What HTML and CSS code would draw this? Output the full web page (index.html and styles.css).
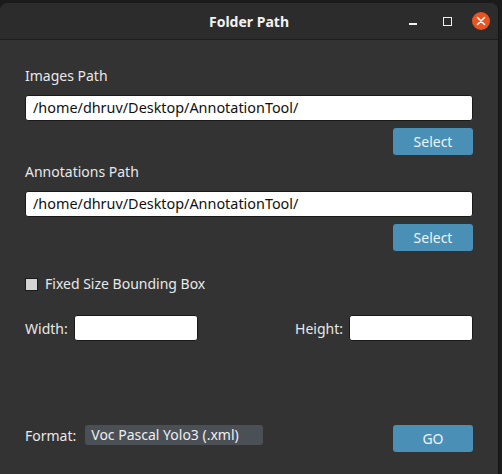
FILE: index.html
```html
<!DOCTYPE html>
<html>
<head>
<meta charset="utf-8">
<link rel="stylesheet" href="styles.css">
</head>
<body>
<div class="window">
  <div class="titlebar">
    <div class="title">Folder Path</div>
    <div class="controls">
      <span class="ctl min"></span>
      <span class="ctl max"></span>
      <span class="ctl close">
        <svg width="18" height="18" viewBox="0 0 18 18"><path d="M5.5 5.5 L12.5 12.5 M12.5 5.5 L5.5 12.5" stroke="#fff" stroke-width="1.6" stroke-linecap="round"/></svg>
      </span>
    </div>
  </div>
  <div class="content">
    <div class="label first">Images Path</div>
    <div class="field">/home/dhruv/Desktop/AnnotationTool/</div>
    <div class="btnrow"><button class="btn">Select</button></div>
    <div class="label second">Annotations Path</div>
    <div class="field">/home/dhruv/Desktop/AnnotationTool/</div>
    <div class="btnrow"><button class="btn">Select</button></div>
    <div class="check"><span class="box"></span><span>Fixed Size Bounding Box</span></div>
    <div class="sizes">
      <div class="pair"><span>Width:</span><span class="small-field"></span></div>
      <div class="pair"><span>Height:</span><span class="small-field h"></span></div>
    </div>
    <div class="bottom">
      <div class="fmt"><span>Format:</span><span class="combo">Voc Pascal Yolo3 (.xml)</span></div>
      <button class="btn go">GO</button>
    </div>
  </div>
</div>
</body>
</html>
```
FILE: styles.css
```css
* { box-sizing: border-box; }
html, body { margin: 0; padding: 0; }
body {
  background: #1b1b1b;
  width: 502px;
  height: 474px;
  overflow: hidden;
  font-family: "Noto Sans", "Open Sans", sans-serif;
  color: #e8e8e8;
}
.window {
  margin-top: 3px;
  width: 499px;
  height: 471px;
  background: #333333;
  border-radius: 8px 8px 0 0;
  border-right: 1px solid #161616;
  overflow: hidden;
}
.titlebar {
  height: 37px;
  background: #2c2c2c;
  border-bottom: 1px solid #1e1e1e;
  display: flex;
  align-items: center;
  justify-content: center;
  position: relative;
}
.title {
  font-weight: bold;
  font-size: 14px;
  color: #f2f2f2;
  padding-top: 1px;
}
.controls {
  position: absolute;
  right: 8px;
  top: 9px;
  display: flex;
  align-items: center;
}
.ctl { display: block; }
.min {
  width: 8px;
  height: 1.5px;
  background: #f0f0f0;
  margin-right: 26px;
  margin-top: 6px;
}
.max {
  width: 9px;
  height: 9px;
  border: 1.5px solid #f0f0f0;
  margin-right: 20px;
}
.close {
  width: 18px;
  height: 18px;
  border-radius: 50%;
  background: #e95420;
}
.close svg { display: block; }
.content {
  padding: 0 25px 0 25px;
}
.label {
  font-size: 14px;
  line-height: 18px;
}
.label.first { margin-top: 27px; }
.label.second { margin-top: 8px; }
.field {
  margin-top: 10px;
  height: 26px;
  background: #ffffff;
  border-radius: 3px;
  border: 1px solid #1a1a1a;
  color: #111;
  font-size: 14.4px;
  line-height: 24px;
  padding-left: 7px;
}
.btnrow {
  display: flex;
  justify-content: flex-end;
  margin-top: 7px;
}
.btn {
  width: 80px;
  height: 27px;
  background: #4a8fb5;
  border: none;
  border-radius: 3px;
  color: #eef4f8;
  font-family: inherit;
  font-size: 14px;
  padding: 0;
}
.check {
  margin-top: 24px;
  display: flex;
  align-items: center;
  gap: 7px;
  font-size: 14px;
  line-height: 18px;
}
.box {
  width: 13px;
  height: 13px;
  background: #d4d4d4;
  border: 1px solid #1a1a1a;
}
.sizes {
  margin-top: 22px;
  display: flex;
  justify-content: space-between;
}
.pair {
  display: flex;
  align-items: center;
  gap: 6px;
  font-size: 14px;
}
.small-field {
  display: block;
  width: 124px;
  height: 26px;
  background: #fff;
  border-radius: 3px;
  border: 1px solid #1a1a1a;
}
.bottom {
  margin-top: 84px;
  display: flex;
  justify-content: space-between;
  align-items: flex-start;
}
.fmt {
  display: flex;
  align-items: center;
  gap: 9px;
  font-size: 14px;
  height: 20px;
}
.combo {
  display: block;
  width: 178px;
  height: 20px;
  background: #4b5057;
  border-radius: 3px;
  padding-left: 6px;
  font-size: 14px;
  line-height: 20px;
  color: #eeeeee;
}
.go { width: 80px; }
```
